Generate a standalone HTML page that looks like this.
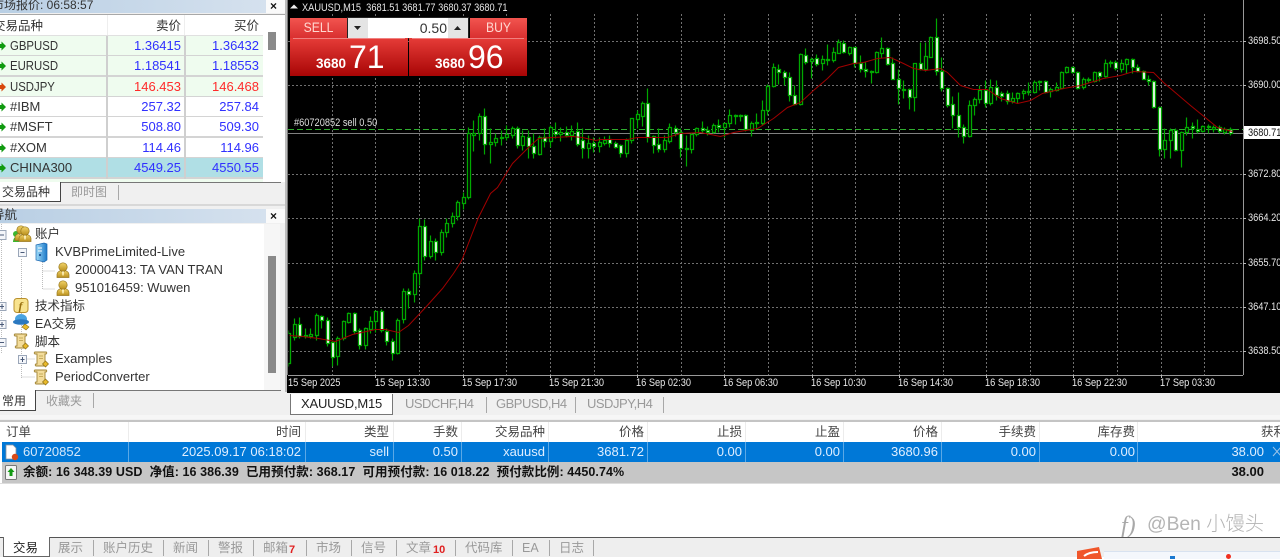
<!DOCTYPE html>
<html lang="zh"><head><meta charset="utf-8"><title>MT4</title>
<style>
html,body{margin:0;padding:0;width:1280px;height:559px;overflow:hidden;background:#f0f0f0}
body{position:relative;font-family:"Liberation Sans","Noto Sans CJK SC",sans-serif;font-size:13px;color:#333}
.a{position:absolute}
.t{position:absolute;white-space:nowrap;line-height:16px;left:0}
.r{text-align:right}
.b{color:#3030ff}.d{color:#ff2a2a}
.n{transform:scaleX(.875);transform-origin:left center}
.c{font-size:12.5px}
.g{color:#999}
.w{color:#dfeeff}
.ct{letter-spacing:-.5px}
.tk{color:#e8e8e8;font-size:11px;line-height:12px;transform:scaleX(.84);transform-origin:left center}
.sep{position:absolute;width:1px;background:#a8a8a8}
.row{position:absolute;left:0;width:263px;height:19px;border-bottom:2px solid #d4d4d4}
.hd{color:#444}
</style></head><body>

<!-- left panel -->
<div class="a" style="left:0;top:0;width:285px;height:412px;background:#f0f0f0"></div>
<div class="a" style="left:0;top:0;width:266px;height:13px;background:linear-gradient(90deg,#b9cfe4,#d5e1ee)"></div>
<div class="t" style="left:-8px;top:-3px;color:#333;font-size:12px">市场报价: 06:58:57</div>
<div class="a" style="left:266px;top:0;width:19px;height:13px;background:#fafafa"></div>
<div class="t" style="left:270px;top:-2px;font-weight:bold;color:#111;font-size:12px">×</div>

<div class="a" style="left:0;top:14px;width:285px;height:168px;background:#fff;border-top:1px solid #a8a8a8;box-sizing:border-box"></div>
<div class="a" style="left:0;top:35px;width:263px;height:1px;background:#e0e0e0"></div>
<div class="a" style="left:107px;top:15px;width:1px;height:20px;background:#eee"></div>
<div class="a" style="left:184px;top:15px;width:1px;height:20px;background:#eee"></div>
<div class="t c" style="left:-7px;top:18px;width:50px">交易品种</div>
<div class="t r c" style="width:181px;top:18px">卖价</div>
<div class="t r c" style="width:259px;top:18px">买价</div>

<div class="row" style="top:36px;background:#effcef"></div>
<div class="row" style="top:56.4px;background:#effcef"></div>
<div class="row" style="top:76.8px;background:#effcef"></div>
<div class="row" style="top:97px;background:#fff"></div>
<div class="row" style="top:117.4px;background:#fff"></div>
<div class="row" style="top:137.8px;background:#fff"></div>
<div class="row" style="top:158px;background:#b0dfe5"></div>
<div class="a" style="left:0;top:179px;width:263px;height:3px;background:#effcef"></div>
<div class="a" style="left:106px;top:36px;width:1.5px;height:143px;background:#cfcfcf"></div>
<div class="a" style="left:184px;top:36px;width:1.5px;height:143px;background:#cfcfcf"></div>

<svg class="a" style="left:0;top:36px" width="8" height="144"><g fill="#109a10"><path d="M0 8H1.500V5.500L6 10 1.500 14.500V12H0z"/><path d="M0 28H1.500V25.500L6 30 1.500 34.500V32H0z"/><path d="M0 69H1.500V66.500L6 71 1.500 75.500V73H0z"/><path d="M0 89H1.500V86.500L6 91 1.500 95.500V93H0z"/><path d="M0 110H1.500V107.500L6 112 1.500 116.500V114H0z"/><path d="M0 130H1.500V127.500L6 132 1.500 136.500V134H0z"/></g><path fill="#d8480c" d="M0 49H1.500V46.500L6 51 1.500 55.500V53H0z"/></svg>

<div class="t n" style="left:10px;top:38px">GBPUSD</div><div class="t r b" style="width:181px;top:38px">1.36415</div><div class="t r b" style="width:259px;top:38px">1.36432</div>
<div class="t n" style="left:10px;top:58px">EURUSD</div><div class="t r b" style="width:181px;top:58px">1.18541</div><div class="t r b" style="width:259px;top:58px">1.18553</div>
<div class="t n" style="left:10px;top:79px">USDJPY</div><div class="t r d" style="width:181px;top:79px">146.453</div><div class="t r d" style="width:259px;top:79px">146.468</div>
<div class="t" style="left:10px;top:99px">#IBM</div><div class="t r b" style="width:181px;top:99px">257.32</div><div class="t r b" style="width:259px;top:99px">257.84</div>
<div class="t" style="left:10px;top:119px">#MSFT</div><div class="t r b" style="width:181px;top:119px">508.80</div><div class="t r b" style="width:259px;top:119px">509.30</div>
<div class="t" style="left:10px;top:140px">#XOM</div><div class="t r b" style="width:181px;top:140px">114.46</div><div class="t r b" style="width:259px;top:140px">114.96</div>
<div class="t" style="left:10px;top:160px">CHINA300</div><div class="t r b" style="width:181px;top:160px">4549.25</div><div class="t r b" style="width:259px;top:160px">4550.55</div>

<div class="a" style="left:268px;top:32px;width:8px;height:18px;background:#8a8a8a"></div>

<!-- market tabs -->
<div class="a" style="left:0;top:182px;width:281px;height:1px;background:#777"></div>
<div class="a" style="left:0;top:182px;width:60px;height:19px;background:#fff;border-right:1px solid #444;border-bottom:1px solid #444"></div>
<div class="t c" style="left:2px;top:184px;font-size:12px">交易品种</div>
<div class="t c g" style="left:71px;top:184px;font-size:12px">即时图</div>
<div class="sep" style="left:118px;top:185px;height:15px"></div>

<div class="a" style="left:0;top:204px;width:285px;height:2px;background:#d8d8d8"></div>

<!-- navigator -->
<div class="a" style="left:0;top:209px;width:266px;height:14px;background:linear-gradient(90deg,#b9cfe4,#d5e1ee)"></div>
<div class="t c" style="left:-8px;top:207px">导航</div>
<div class="a" style="left:266px;top:209px;width:19px;height:14px;background:#fafafa"></div>
<div class="t" style="left:270px;top:208px;font-weight:bold;color:#111;font-size:12px">×</div>
<div class="a" style="left:0;top:224px;width:264px;height:166px;background:#fff"></div>
<div class="a" style="left:264px;top:224px;width:16px;height:166px;background:#f6f6f6"></div>
<div class="a" style="left:268px;top:256px;width:8px;height:117px;background:#8a8a8a"></div>

<svg class="a" style="left:0;top:224px" width="264" height="166">
<defs>
<linearGradient id="gd" x1="0" y1="0" x2="0" y2="1"><stop offset="0" stop-color="#f2d46a"/><stop offset="1" stop-color="#b98f1c"/></linearGradient>
<linearGradient id="sv" x1="0" y1="0" x2="1" y2="0"><stop offset="0" stop-color="#9fdcf8"/><stop offset="1" stop-color="#1b78c8"/></linearGradient>
<g id="pp"><circle cx="7" cy="5" r="4.2" fill="url(#gd)" stroke="#9a7a20" stroke-width=".7"/><path d="M1 15.500v-3c0-2.600 2.600-3.600 3.600-4l2.400 2 2.400-2c1 .4 3.600 1.400 3.600 4v3z" fill="url(#gd)" stroke="#9a7a20" stroke-width=".7"/><path d="M6 9.500h2l-.4 4h-1.200z" fill="#fff3c0"/></g>
<g id="sc"><path d="M2 1h11c1 0 1 2 0 2h-1v9h2l-1 3H3c-1 0-1-2 0-2h1V3H2C1 3 1 1 2 1z" fill="#f3dc9a" stroke="#a08436" stroke-width=".9"/><path d="M6 5h4M6 7.500h4" stroke="#b89a48" stroke-width=".8"/><path d="M12.500 10l3 3-3 3-3-3z" fill="#e8b92a" stroke="#8a6c12" stroke-width=".7"/></g>
</defs>
<g fill="none" stroke="#bdbdbd" stroke-dasharray="1 1"><path d="M1.500 0V130M21.500 35V155M42.500 36V65H55M42.500 47H55M21.500 135H35M21.500 153H35"/></g>
<g fill="#f4f6fa" stroke="#9aa6b8"><path d="M-3 6.500h9v9h-9zM18.500 24.500h8v8h-8zM-3 78.500h9v8h-9zM-3 96.500h9v8h-9zM-3 114.500h9v8h-9zM18.500 131.500h8v8h-8z"/></g>
<path d="M0 11h4M20.500 28.500h4M0 82.500h4M2 80v5M0 100.500h4M2 98v5M0 118.500h4M20.500 135.500h4M22.500 133v5" stroke="#4a5a78" fill="none"/>
<circle cx="16" cy="10" r="3" fill="#3bb62f"/><path d="M13 18c0-3 1.600-5 3-5s3 2 3 5z" fill="#3bb62f"/>
<use href="#pp" x="14" y="1"/><use href="#pp" x="18" y="2"/>
<path d="M36 21l8-2 3 1v16l-3 2-8-2z" fill="url(#sv)" stroke="#1a66b0" stroke-width=".7"/><path d="M38 24h4M38 27h4" stroke="#fff" stroke-width="1"/><path d="M39 31h2" stroke="#0a3a80" stroke-width="1.500"/>
<use href="#pp" x="56" y="38"/><use href="#pp" x="56" y="56"/>
<rect x="14" y="74.500" width="14" height="14" rx="3" fill="#f8e38e" stroke="#b9902c"/><text x="18.500" y="86" font-family="Liberation Serif,serif" font-style="italic" font-weight="bold" font-size="12" fill="#9a7010">f</text>
<ellipse cx="21" cy="95" rx="6" ry="5" fill="#4aa3e0"/><ellipse cx="21" cy="98" rx="8" ry="2.800" fill="#2a78c0"/><path d="M25 100l4 3-3 3-4-3z" fill="#e8b92a" stroke="#8a6c12" stroke-width=".6"/>
<use href="#sc" x="13" y="109"/><use href="#sc" x="33" y="127"/><use href="#sc" x="33" y="145"/>
</svg>

<div class="t c" style="left:35px;top:226px">账户</div>
<div class="t" style="left:55px;top:244px">KVBPrimeLimited-Live</div>
<div class="t" style="left:75px;top:262px">20000413: TA VAN TRAN</div>
<div class="t" style="left:75px;top:280px">951016459: Wuwen</div>
<div class="t c" style="left:35px;top:298px">技术指标</div>
<div class="t c" style="left:35px;top:316px">EA交易</div>
<div class="t c" style="left:35px;top:334px">脚本</div>
<div class="t" style="left:55px;top:351px">Examples</div>
<div class="t" style="left:55px;top:369px">PeriodConverter</div>

<!-- nav tabs -->
<div class="a" style="left:0;top:390px;width:281px;height:1px;background:#777"></div>
<div class="a" style="left:0;top:390px;width:35px;height:20px;background:#fff;border-right:1px solid #444;border-bottom:1px solid #444"></div>
<div class="t" style="left:2px;top:393px;font-size:12px">常用</div>
<div class="t g" style="left:46px;top:393px;font-size:12px">收藏夹</div>
<div class="sep" style="left:93px;top:393px;height:15px"></div>

<div class="a" style="left:285px;top:0;width:2px;height:392px;background:#bbb"></div>

<!-- chart -->
<div class="a" style="left:287px;top:0;width:993px;height:393px;background:#000"></div>
<svg class="a" style="left:287px;top:0" width="993" height="393" viewBox="287 0 993 393">
<defs><clipPath id="cp"><rect x="288" y="14" width="955" height="361"/></clipPath></defs>
<path d="M287.500 0V375" stroke="#777" fill="none"/>
<path d="M1243.500 0V375M288 375.500H1243" stroke="#999" fill="none"/>
<g stroke="#707070" fill="none" stroke-dasharray="2 2">
<path d="M332.500 14V375M375.500 14V375M419.500 14V375M463.500 14V375M506.500 14V375M550.500 14V375M594.500 14V375M637.500 14V375M681.500 14V375M724.500 14V375M768.500 14V375M812.500 14V375M855.500 14V375M899.500 14V375M943.500 14V375M986.500 14V375M1030.500 14V375M1073.500 14V375M1117.500 14V375M1161.500 14V375M1204.500 14V375"/>
<path d="M288 41.500H1243M288 85.500H1243M288 174.500H1243M288 218.500H1243M288 263.500H1243M288 307.500H1243M288 351.500H1243"/>
</g>
<path d="M288 129.500H1243" stroke="#2fae2f" fill="none" stroke-dasharray="6 3"/>
<path d="M288 133.500H1243" stroke="#808080" fill="none"/>
<g clip-path="url(#cp)" transform="translate(.5 .5)">
<path fill="none" stroke="#00a800" stroke-width="1.200" d="M288 330V366M294 318V340M299 317V338M305 328V338M310 328V338M316 313V340M321 315V328M327 317V346M332 340V366M337 336V365M343 320V340M348 312V323M354 312V333M359 328V349M365 327V349M370 316V333M375 310V332M381 309V332M386 328V345M392 338V360M397 318V354M403 288V323M408 288V308M414 270V302M419 218V285M424 219V260M430 235V258M435 238V260M441 229V255M446 218V237M452 212V227M457 200V220M463 192V209M468 127V199M473 120V151M479 113V140M484 108V154M490 128V163M495 133V146M501 130V145M506 125V140M512 126V138M517 126V148M522 130V150M528 130V158M533 133V158M539 135V155M544 128V147M550 125V147M555 122V138M560 127V141M566 126V137M571 125V140M577 122V146M582 128V158M588 135V158M593 137V152M599 137V152M604 136V145M609 135V147M615 141V148M620 144V157M626 138V157M631 118V143M637 110V128M642 101V126M647 88V142M653 135V153M658 128V152M664 135V152M669 123V143M675 125V136M680 128V157M686 135V166M691 133V153M696 127V136M702 121V133M707 126V135M713 123V133M718 119V132M724 122V137M729 109V127M735 114V124M740 114V121M745 114V131M751 121V136M756 113V128M762 100V125M767 84V115M773 63V87M778 64V84M784 70V85M789 72V101M794 85V105M800 53V105M805 48V64M811 57V78M816 54V66M822 55V70M827 44V65M833 47V62M838 39V53M843 40V53M849 46V55M854 47V67M860 55V72M865 62V77M871 70V83M876 51V73M881 37V58M887 47V65M892 57V79M898 69V104M903 80V98M909 88V109M914 63V111M920 42V70M925 42V71M930 36V57M936 18V75M941 57V91M947 87V107M952 96V128M958 92V137M963 124V143M969 100V137M974 97V115M979 85V103M985 80V107M990 79V105M996 80V100M1001 91V101M1007 90V104M1012 92V103M1017 92V103M1023 89V99M1028 82V95M1034 80V93M1039 80V90M1045 80V93M1050 87V97M1056 82V91M1061 71V89M1066 66V73M1072 66V73M1077 71V89M1083 77V89M1088 77V82M1094 71V82M1099 71V81M1105 59V77M1110 60V67M1115 60V70M1121 59V72M1126 58V73M1132 58V73M1137 64V72M1143 70V79M1148 75V85M1153 80V108M1159 106V156M1164 128V158M1170 128V158M1175 128V151M1181 131V167M1186 117V135M1192 122V138M1197 119V133M1202 125V132M1208 124V133M1213 125V132M1219 125V133M1224 127V134M1230 127V135"/>
<path fill="#000" stroke="#00a800" stroke-width="1.300" d="M287 333h3V363h-3zM293 324h3V337h-3zM304 335h3V336h-3zM309 334h3V336h-3zM315 315h3V335h-3zM336 338h3V356h-3zM342 321h3V338h-3zM347 313h3V322h-3zM364 328h3V345h-3zM369 321h3V329h-3zM374 311h3V321h-3zM396 320h3V353h-3zM402 291h3V319h-3zM413 273h3V294h-3zM418 226h3V273h-3zM429 241h3V256h-3zM440 232h3V252h-3zM445 223h3V232h-3zM451 216h3V223h-3zM456 202h3V216h-3zM462 197h3V203h-3zM467 133h3V197h-3zM472 133h3V135h-3zM478 116h3V133h-3zM489 142h3V144h-3zM494 138h3V142h-3zM500 137h3V138h-3zM505 134h3V137h-3zM511 128h3V135h-3zM521 136h3V145h-3zM538 137h3V154h-3zM549 127h3V141h-3zM559 132h3V134h-3zM570 131h3V135h-3zM587 143h3V148h-3zM598 142h3V146h-3zM603 140h3V143h-3zM625 140h3V153h-3zM630 118h3V140h-3zM636 114h3V119h-3zM641 103h3V116h-3zM663 140h3V149h-3zM668 127h3V141h-3zM690 134h3V149h-3zM695 128h3V134h-3zM712 125h3V132h-3zM723 123h3V127h-3zM728 115h3V123h-3zM734 115h3V116h-3zM739 115h3V116h-3zM750 123h3V130h-3zM761 110h3V123h-3zM766 86h3V110h-3zM772 67h3V86h-3zM799 54h3V104h-3zM810 59h3V61h-3zM821 59h3V63h-3zM826 59h3V60h-3zM832 52h3V60h-3zM837 42h3V53h-3zM848 47h3V53h-3zM875 52h3V72h-3zM880 48h3V53h-3zM913 63h3V97h-3zM924 56h3V69h-3zM929 37h3V57h-3zM968 105h3V136h-3zM973 99h3V105h-3zM978 90h3V99h-3zM989 87h3V103h-3zM1011 98h3V101h-3zM1016 93h3V98h-3zM1022 91h3V93h-3zM1027 91h3V92h-3zM1033 82h3V92h-3zM1038 81h3V82h-3zM1049 89h3V91h-3zM1055 87h3V90h-3zM1060 72h3V88h-3zM1065 67h3V72h-3zM1082 79h3V87h-3zM1087 79h3V80h-3zM1093 72h3V81h-3zM1104 63h3V76h-3zM1109 62h3V63h-3zM1120 63h3V69h-3zM1125 59h3V64h-3zM1163 140h3V149h-3zM1169 130h3V140h-3zM1180 132h3V150h-3zM1185 127h3V132h-3zM1201 126h3V131h-3zM1212 127h3V129h-3zM1223 129h3V132h-3z"/>
<path fill="#fff" stroke="#00a800" stroke-width="1.300" d="M298 324h3V336h-3zM320 316h3V320h-3zM326 320h3V343h-3zM331 342h3V357h-3zM353 313h3V331h-3zM358 330h3V345h-3zM380 311h3V330h-3zM385 331h3V341h-3zM391 341h3V353h-3zM407 291h3V294h-3zM423 226h3V256h-3zM434 241h3V252h-3zM483 116h3V144h-3zM516 128h3V145h-3zM527 137h3V146h-3zM532 146h3V153h-3zM543 137h3V141h-3zM554 131h3V134h-3zM565 132h3V135h-3zM576 131h3V144h-3zM581 140h3V148h-3zM592 143h3V146h-3zM608 139h3V143h-3zM614 143h3V147h-3zM619 145h3V153h-3zM646 103h3V137h-3zM652 136h3V145h-3zM657 144h3V149h-3zM674 128h3V132h-3zM679 132h3V148h-3zM685 148h3V149h-3zM701 128h3V130h-3zM706 130h3V132h-3zM717 125h3V127h-3zM744 115h3V129h-3zM755 122h3V123h-3zM777 69h3V72h-3zM783 72h3V77h-3zM788 77h3V95h-3zM793 95h3V104h-3zM804 55h3V62h-3zM815 58h3V64h-3zM842 43h3V52h-3zM853 47h3V63h-3zM859 63h3V69h-3zM864 69h3V71h-3zM870 71h3V72h-3zM886 48h3V64h-3zM891 63h3V79h-3zM897 79h3V88h-3zM902 89h3V90h-3zM908 89h3V97h-3zM919 63h3V69h-3zM935 37h3V71h-3zM940 71h3V88h-3zM946 88h3V105h-3zM951 104h3V115h-3zM957 115h3V127h-3zM962 127h3V136h-3zM984 90h3V103h-3zM995 87h3V95h-3zM1000 93h3V96h-3zM1006 93h3V101h-3zM1044 81h3V92h-3zM1071 67h3V72h-3zM1076 72h3V88h-3zM1098 72h3V76h-3zM1114 62h3V68h-3zM1131 59h3V67h-3zM1136 67h3V71h-3zM1142 71h3V79h-3zM1147 79h3V81h-3zM1152 81h3V107h-3zM1158 107h3V149h-3zM1174 130h3V150h-3zM1191 126h3V128h-3zM1196 129h3V131h-3zM1207 126h3V127h-3zM1218 127h3V131h-3zM1229 129h3V133h-3z"/>
<path fill="none" stroke="#a00000" stroke-width="1" d="M289 335L302 336 318 338 335 341 352 334 375 329 385 329 398 332 408 325 425 307 442 288 453 273 460 262 462 258 478 217 490 193 497 187 512 163 528 147 538 138 552 137 572 136 582 137 595 140 600 139 620 139 627 139 637 137 647 137 667 137 680 133 700 132 720 136 733 132 757 128 773 118 787 107 800 102 813 90 827 78 838 67 853 63 863 62 877 58 890 57 903 63 913 68 925 70 940 68 947 72 960 85 973 89 987 89 1000 98 1017 103 1030 100 1042 93 1063 88 1080 85 1103 78 1120 75 1133 71 1153 72 1163 82 1190 105 1217 127 1232 131"/>
</g>
<path d="M288 4.500l4-4 4 4z" transform="translate(2 4)" fill="#eee"/>
<path d="M1243 41.500h3M1243 85.500h3M1243 130.500h3M1243 174.500h3M1243 218.500h3M1243 263.500h3M1243 307.500h3M1243 351.500h3M375.500 375v3M463.500 375v3M550.500 375v3M637.500 375v3M724.500 375v3M812.500 375v3M899.500 375v3M986.500 375v3M1073.500 375v3M1161.500 375v3" stroke="#bbb" fill="none"/>
</svg>
<div class="t tk" style="left:302px;top:2px">XAUUSD,M15&nbsp; 3681.51 3681.77 3680.37 3680.71</div>
<div class="t tk" style="left:294px;top:117px;color:#ddd">#60720852 sell 0.50</div>

<!-- one-click panel -->
<div class="a" style="left:290px;top:18px;width:57px;height:20px;background:linear-gradient(#f2544f,#d93030)"></div>
<div class="t" style="left:290px;top:20px;width:57px;text-align:center;color:#ffd7d0;font-size:13.500px;transform:scaleX(.9)">SELL</div>
<div class="a" style="left:347px;top:17px;width:122px;height:22px;background:#222"></div>
<div class="a" style="left:348px;top:18px;width:120px;height:20px;background:#fff"></div>
<div class="a" style="left:348px;top:18px;width:20px;height:20px;background:#e4e4e4"></div>
<div class="a" style="left:448px;top:18px;width:20px;height:20px;background:#e4e4e4"></div>
<svg class="a" style="left:348px;top:18px" width="120" height="20"><path d="M6 8h7l-3.500 4zM106 12h7l-3.500-4z" fill="#222"/></svg>
<div class="t r" style="width:447px;top:20px;color:#333;font-size:14px">0.50</div>
<div class="a" style="left:470px;top:18px;width:57px;height:20px;background:linear-gradient(#f2544f,#d93030)"></div>
<div class="t" style="left:470px;top:20px;width:57px;text-align:center;color:#ffd7d0;font-size:13.500px;transform:scaleX(.9)">BUY</div>
<div class="a" style="left:290px;top:38px;width:118px;height:38px;background:linear-gradient(#e63c38,#a80505)"></div>
<div class="a" style="left:409px;top:38px;width:118px;height:38px;background:linear-gradient(#e63c38,#a80505)"></div>
<div class="a" style="left:293px;top:38px;width:112px;height:1px;background:#f08080"></div>
<div class="a" style="left:412px;top:38px;width:112px;height:1px;background:#f08080"></div>
<div class="t" style="left:316px;top:56px;color:#fff;font-weight:bold;font-size:13.500px">3680</div>
<div class="t" style="left:349px;top:45px;color:#fff;font-size:32px;line-height:24px">71</div>
<div class="t" style="left:435px;top:56px;color:#fff;font-weight:bold;font-size:13.500px">3680</div>
<div class="t" style="left:468px;top:45px;color:#fff;font-size:32px;line-height:24px">96</div>

<!-- price axis -->
<div class="t tk" style="left:1248px;top:35px">3698.50</div>
<div class="t tk" style="left:1248px;top:79px">3690.00</div>
<div class="a" style="left:1244px;top:126px;width:36px;height:13px;background:#fff"></div>
<div class="t tk" style="left:1248px;top:127px;color:#111">3680.71</div>
<div class="t tk" style="left:1248px;top:168px">3672.80</div>
<div class="t tk" style="left:1248px;top:212px">3664.20</div>
<div class="t tk" style="left:1248px;top:257px">3655.70</div>
<div class="t tk" style="left:1248px;top:301px">3647.10</div>
<div class="t tk" style="left:1248px;top:345px">3638.50</div>

<!-- time axis -->
<div class="t tk" style="left:288px;top:377px">15 Sep 2025</div>
<div class="t tk" style="left:375px;top:377px">15 Sep 13:30</div>
<div class="t tk" style="left:462px;top:377px">15 Sep 17:30</div>
<div class="t tk" style="left:549px;top:377px">15 Sep 21:30</div>
<div class="t tk" style="left:636px;top:377px">16 Sep 02:30</div>
<div class="t tk" style="left:723px;top:377px">16 Sep 06:30</div>
<div class="t tk" style="left:811px;top:377px">16 Sep 10:30</div>
<div class="t tk" style="left:898px;top:377px">16 Sep 14:30</div>
<div class="t tk" style="left:985px;top:377px">16 Sep 18:30</div>
<div class="t tk" style="left:1072px;top:377px">16 Sep 22:30</div>
<div class="t tk" style="left:1160px;top:377px">17 Sep 03:30</div>

<!-- chart tabs -->
<div class="a" style="left:285px;top:393px;width:995px;height:22px;background:#f0f0f0"></div>
<div class="a" style="left:290px;top:394px;width:101px;height:20px;background:#fff;border:1px solid #777;border-top:0"></div>
<div class="t ct" style="left:301px;top:396px;color:#222;letter-spacing:-.2px">XAUUSD,M15</div>
<div class="t g ct" style="left:405px;top:396px">USDCHF,H4</div><div class="sep" style="left:486px;top:397px;height:16px"></div>
<div class="t g ct" style="left:496px;top:396px">GBPUSD,H4</div><div class="sep" style="left:575px;top:397px;height:16px"></div>
<div class="t g ct" style="left:587px;top:396px">USDJPY,H4</div><div class="sep" style="left:663px;top:397px;height:16px"></div>
<div class="a" style="left:0;top:415px;width:1280px;height:4px;background:#f6f6f6"></div>

<!-- terminal -->
<div class="a" style="left:0;top:420px;width:1280px;height:117px;background:#fff;border-top:2px solid #c4c4c4;box-sizing:border-box"></div>
<div class="t c hd" style="left:6px;top:424px">订单</div>
<div class="t c r hd" style="width:301px;top:424px">时间</div>
<div class="t c r hd" style="width:389px;top:424px">类型</div>
<div class="t c r hd" style="width:458px;top:424px">手数</div>
<div class="t c r hd" style="width:545px;top:424px">交易品种</div>
<div class="t c r hd" style="width:644px;top:424px">价格</div>
<div class="t c r hd" style="width:742px;top:424px">止损</div>
<div class="t c r hd" style="width:840px;top:424px">止盈</div>
<div class="t c r hd" style="width:938px;top:424px">价格</div>
<div class="t c r hd" style="width:1036px;top:424px">手续费</div>
<div class="t c r hd" style="width:1135px;top:424px">库存费</div>
<div class="t c" style="left:1261px;top:424px;color:#444">获利</div>

<div class="a" style="left:2px;top:442px;width:1278px;height:20px;background:#0078d7"></div>
<div class="a" style="left:2px;top:462px;width:1278px;height:21px;background:#c6c6c6"></div>
<div class="a" style="left:0;top:483px;width:1280px;height:1px;background:#ddd"></div>
<svg class="a" style="left:0;top:441px" width="1280" height="44">
<g stroke="#5ba8e6"><path d="M128.500 1V21M305.500 1V21M393.500 1V21M461.500 1V21M548.500 1V21M647.500 1V21M745.500 1V21M843.500 1V21M941.500 1V21M1039.500 1V21M1137.500 1V21"/></g>
<path d="M6 4h7l3 3v11H6z" fill="#fff" stroke="#8a94a0" stroke-width=".8"/><circle cx="15" cy="16" r="3.200" fill="#d84a16"/>
<rect x="5.500" y="24.500" width="11" height="14" rx="1" fill="#f6f6f6" stroke="#777"/><path d="M11 27l3.500 4H12.500v4h-3v-4H7.500z" fill="#139a13"/>
<path d="M1273 15l8-9M1273 6l8 9" stroke="#9cc4e8" fill="none"/>
</svg>
<svg class="a" style="left:0;top:422px" width="1280" height="20"><path d="M128.500 0V20M305.500 0V20M393.500 0V20M461.500 0V20M548.500 0V20M647.500 0V20M745.500 0V20M843.500 0V20M941.500 0V20M1039.500 0V20M1137.500 0V20" stroke="#ececec"/></svg>

<div class="t" style="left:23px;top:444px;color:#d6e8fa">60720852</div>
<div class="t r w" style="width:301px;top:444px">2025.09.17 06:18:02</div>
<div class="t r w" style="width:389px;top:444px">sell</div>
<div class="t r w" style="width:458px;top:444px">0.50</div>
<div class="t r w" style="width:545px;top:444px">xauusd</div>
<div class="t r w" style="width:644px;top:444px">3681.72</div>
<div class="t r w" style="width:742px;top:444px">0.00</div>
<div class="t r w" style="width:840px;top:444px">0.00</div>
<div class="t r w" style="width:938px;top:444px">3680.96</div>
<div class="t r w" style="width:1036px;top:444px">0.00</div>
<div class="t r w" style="width:1135px;top:444px">0.00</div>
<div class="t r w" style="width:1264px;top:444px">38.00</div>

<div class="t" style="left:23px;top:464px;font-weight:bold;color:#111;font-size:12.500px;letter-spacing:.08px">余额: 16 348.39 USD&nbsp; 净值: 16 386.39&nbsp; 已用预付款: 368.17&nbsp; 可用预付款: 16 018.22&nbsp; 预付款比例: 4450.74%</div>
<div class="t r" style="width:1264px;top:464px;font-weight:bold;color:#111">38.00</div>

<!-- watermark -->
<div class="t" style="left:1121px;top:514px;color:#a8a8a8;font-size:24px;line-height:24px;font-family:'Liberation Serif',serif;font-style:italic">f)</div>
<div class="t" style="left:1147px;top:514px;color:#b4b4b4;font-size:19.300px;line-height:22px;font-family:'Liberation Sans','Noto Sans CJK SC',sans-serif;font-weight:300">@Ben 小馒头</div>

<!-- bottom tabs -->
<div class="a" style="left:0;top:537px;width:1280px;height:1px;background:#555"></div>
<div class="a" style="left:0;top:538px;width:1280px;height:19px;background:#eee"></div>
<div class="a" style="left:3px;top:537px;width:45px;height:19px;background:#fff;border:1px solid #666;border-top:0"></div>
<div class="t c" style="left:13px;top:540px;color:#222">交易</div>
<div class="t c g" style="left:58px;top:540px">展示</div><div class="sep" style="left:93px;top:540px;height:16px"></div>
<div class="t c g" style="left:103px;top:540px">账户历史</div><div class="sep" style="left:163px;top:540px;height:16px"></div>
<div class="t c g" style="left:173px;top:540px">新闻</div><div class="sep" style="left:208px;top:540px;height:16px"></div>
<div class="t c g" style="left:218px;top:540px">警报</div><div class="sep" style="left:253px;top:540px;height:16px"></div>
<div class="t c g" style="left:263px;top:540px">邮箱</div><div class="t" style="left:289px;top:542px;color:#e02020;font-weight:bold;font-size:11px">7</div><div class="sep" style="left:306px;top:540px;height:16px"></div>
<div class="t c g" style="left:316px;top:540px">市场</div><div class="sep" style="left:351px;top:540px;height:16px"></div>
<div class="t c g" style="left:361px;top:540px">信号</div><div class="sep" style="left:396px;top:540px;height:16px"></div>
<div class="t c g" style="left:406px;top:540px">文章</div><div class="t" style="left:433px;top:542px;color:#e02020;font-weight:bold;font-size:11px">10</div><div class="sep" style="left:455px;top:540px;height:16px"></div>
<div class="t c g" style="left:465px;top:540px">代码库</div><div class="sep" style="left:512px;top:540px;height:16px"></div>
<div class="t c g" style="left:522px;top:540px">EA</div><div class="sep" style="left:549px;top:540px;height:16px"></div>
<div class="t c g" style="left:559px;top:540px">日志</div><div class="sep" style="left:593px;top:540px;height:16px"></div>

<div class="a" style="left:0;top:557px;width:1280px;height:2px;background:#fff"></div>
<div class="a" style="left:1104px;top:551px;width:176px;height:8px;background:#f4f7fc;border-top:1px solid #d8e2f0;box-sizing:border-box"></div>
<svg class="a" style="left:1076px;top:547px" width="30" height="12"><path d="M1 4l22-4 3 12H1z" fill="#f0562a"/><path d="M8 9q5-4 14-4" stroke="#fff" stroke-width="2" fill="none"/></svg>
<div class="a" style="left:1170px;top:556px;width:5px;height:3px;background:#1a78d0"></div>
<div class="a" style="left:1226px;top:554px;width:5px;height:5px;border-radius:3px;background:#f03020"></div>
</body></html>
